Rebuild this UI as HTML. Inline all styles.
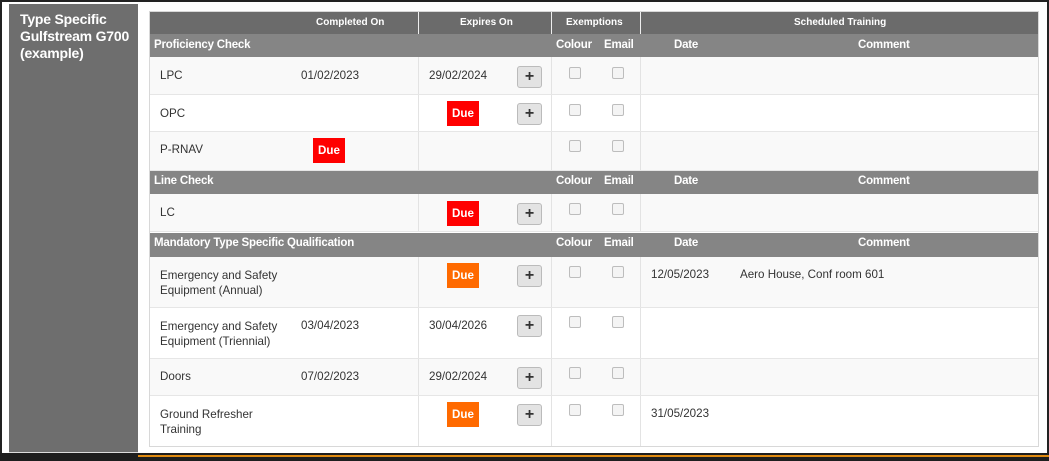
<!DOCTYPE html>
<html><head><meta charset="utf-8"><style>
*{margin:0;padding:0;box-sizing:border-box}
body{width:1049px;height:461px;background:#fff;font-family:"Liberation Sans",Arial,sans-serif;font-size:11.6px;color:#333;position:relative;overflow:hidden}
.frame{position:absolute;left:0;top:0;width:1049px;height:461px;border:2px solid #222;border-bottom:none}
.left{position:absolute;left:9px;top:4px;width:129px;height:448px;background:#6e6e6e;color:#fff;font-weight:bold;font-size:14px;line-height:17px;padding:7px 0 0 11px;letter-spacing:-0.2px}
.bot{position:absolute;left:0;top:453px;width:1049px;height:8px;background:#1e1e1e}
.bl{position:absolute;left:9px;top:452px;width:129px;height:2px;background:#ddd}
.or{position:absolute;left:138px;top:455px;width:911px;height:2px;background:#e08a10}
.tbl{position:absolute;left:149px;top:11px;width:890px;height:436px;border:1px solid #d8d8d8;background:#fff}
.r{position:absolute;left:150px;width:888px}
.r > *{position:absolute}
.h{background:#6b6b6b;color:#fff;font-weight:bold;font-size:10px}
.s{background:#858585;color:#fff;font-weight:bold;font-size:11.5px;letter-spacing:-0.2px}
.d{border-bottom:1px solid #e6e6e6}
.vl{top:0;bottom:0;width:1px;background:#e3e3e3}
.hv{top:0;bottom:0;width:1px;background:#eee}
.due{width:32px;height:25px;color:#fff;font-weight:bold;line-height:25px;text-align:center}
.red{background:#f00}.org{background:#ff6a00}
.pl{width:25px;height:22px;background:#e3e3e3;border:1px solid #bbb;border-radius:3px;text-align:center;line-height:20px;font-weight:bold;font-size:16px;color:#333}
.cb{width:12px;height:12px;border:1px solid #bdbdbd;border-radius:2px;background:#f4f4f4}
</style></head><body>
<div class="frame"></div>
<div class="left">Type Specific<br>Gulfstream G700<br>(example)</div>
<div class="bl"></div>
<div class="bot"></div>
<div class="or"></div>
<div class="tbl"></div>

<div class="r h" style="top:12px;height:22px">
<div class="hv" style="left:268px"></div><div class="hv" style="left:401px"></div><div class="hv" style="left:490px"></div>
<span style="left:166px;top:5px">Completed On</span><span style="left:310px;top:5px">Expires On</span><span style="left:416px;top:5px">Exemptions</span><span style="left:644px;top:5px">Scheduled Training</span></div>

<div class="r s" style="top:34px;height:23px"><span style="left:4px;top:5px">Proficiency Check</span><span style="left:406px;top:5px">Colour</span><span style="left:454px;top:5px">Email</span><span style="left:524px;top:5px">Date</span><span style="left:708px;top:5px">Comment</span></div>

<div class="r d" style="top:57px;height:38px;background:#f9f9f9"><div class="vl" style="left:268px"></div><div class="vl" style="left:401px"></div><div class="vl" style="left:490px"></div>
<span style="left:10px;top:12px">LPC</span><span style="left:151px;top:12px">01/02/2023</span><span style="left:279px;top:12px">29/02/2024</span><div class="pl" style="left:367px;top:9px">+</div><div class="cb" style="left:419px;top:10px"></div><div class="cb" style="left:462px;top:10px"></div></div>

<div class="r d" style="top:95px;height:37px;background:#fff"><div class="vl" style="left:268px"></div><div class="vl" style="left:401px"></div><div class="vl" style="left:490px"></div>
<span style="left:10px;top:12px">OPC</span><div class="due red" style="left:297px;top:6px">Due</div><div class="pl" style="left:367px;top:8px">+</div><div class="cb" style="left:419px;top:9px"></div><div class="cb" style="left:462px;top:9px"></div></div>

<div class="r d" style="top:132px;height:39px;background:#f9f9f9"><div class="vl" style="left:268px"></div><div class="vl" style="left:401px"></div><div class="vl" style="left:490px"></div>
<span style="left:10px;top:11px">P-RNAV</span><div class="due red" style="left:163px;top:6px">Due</div><div class="cb" style="left:419px;top:8px"></div><div class="cb" style="left:462px;top:8px"></div></div>

<div class="r s" style="top:171px;height:23px"><span style="left:4px;top:4px">Line Check</span><span style="left:406px;top:4px">Colour</span><span style="left:454px;top:4px">Email</span><span style="left:524px;top:4px">Date</span><span style="left:708px;top:4px">Comment</span></div>

<div class="r d" style="top:194px;height:38px;background:#f9f9f9"><div class="vl" style="left:268px"></div><div class="vl" style="left:401px"></div><div class="vl" style="left:490px"></div>
<span style="left:10px;top:12px">LC</span><div class="due red" style="left:297px;top:7px">Due</div><div class="pl" style="left:367px;top:9px">+</div><div class="cb" style="left:419px;top:9px"></div><div class="cb" style="left:462px;top:9px"></div></div>

<div class="r s" style="top:233px;height:24px"><span style="left:4px;top:4px">Mandatory Type Specific Qualification</span><span style="left:406px;top:4px">Colour</span><span style="left:454px;top:4px">Email</span><span style="left:524px;top:4px">Date</span><span style="left:708px;top:4px">Comment</span></div>

<div class="r d" style="top:257px;height:51px;background:#f9f9f9"><div class="vl" style="left:268px"></div><div class="vl" style="left:401px"></div><div class="vl" style="left:490px"></div>
<span style="left:10px;top:11px;line-height:15px">Emergency and Safety<br>Equipment (Annual)</span><div class="due org" style="left:297px;top:6px">Due</div><div class="pl" style="left:367px;top:8px">+</div><div class="cb" style="left:419px;top:9px"></div><div class="cb" style="left:462px;top:9px"></div><span style="left:501px;top:11px">12/05/2023</span><span style="left:590px;top:11px">Aero House, Conf room 601</span></div>

<div class="r d" style="top:308px;height:51px;background:#fff"><div class="vl" style="left:268px"></div><div class="vl" style="left:401px"></div><div class="vl" style="left:490px"></div>
<span style="left:10px;top:11px;line-height:15px">Emergency and Safety<br>Equipment (Triennial)</span><span style="left:151px;top:11px">03/04/2023</span><span style="left:279px;top:11px">30/04/2026</span><div class="pl" style="left:367px;top:7px">+</div><div class="cb" style="left:419px;top:8px"></div><div class="cb" style="left:462px;top:8px"></div></div>

<div class="r d" style="top:359px;height:37px;background:#f9f9f9"><div class="vl" style="left:268px"></div><div class="vl" style="left:401px"></div><div class="vl" style="left:490px"></div>
<span style="left:10px;top:11px">Doors</span><span style="left:151px;top:11px">07/02/2023</span><span style="left:279px;top:11px">29/02/2024</span><div class="pl" style="left:367px;top:8px">+</div><div class="cb" style="left:419px;top:8px"></div><div class="cb" style="left:462px;top:8px"></div></div>

<div class="r" style="top:396px;height:50px;background:#fff"><div class="vl" style="left:268px"></div><div class="vl" style="left:401px"></div><div class="vl" style="left:490px"></div>
<span style="left:10px;top:11px;line-height:15px">Ground Refresher<br>Training</span><div class="due org" style="left:297px;top:6px">Due</div><div class="pl" style="left:367px;top:8px">+</div><div class="cb" style="left:419px;top:8px"></div><div class="cb" style="left:462px;top:8px"></div><span style="left:501px;top:11px">31/05/2023</span></div>
</body></html>
